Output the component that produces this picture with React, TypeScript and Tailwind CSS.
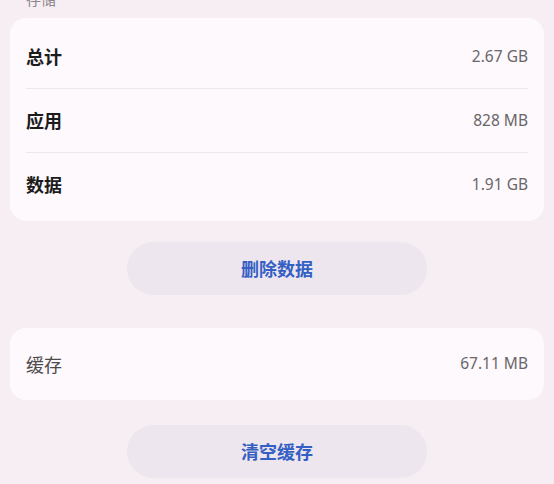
const cjk = '"Noto Sans CJK SC", "Noto Sans", sans-serif';
const num = '"Noto Sans", "Noto Sans CJK SC", sans-serif';

const rows = [
  { label: '总计', value: '2.67 GB' },
  { label: '应用', value: '828 MB' },
  { label: '数据', value: '1.91 GB' },
];

function Pill({ children }: { children: string }) {
  return (
    <button
      className="mx-auto flex h-[53px] w-[300px] items-center justify-center rounded-full bg-[#ede6ee] text-[18px] font-bold text-[#3460c4]"
      style={{ fontFamily: cjk }}
    >
      {children}
    </button>
  );
}

export default function App() {
  return (
    <div className="h-[484px] w-full overflow-hidden bg-[#f6eef3] px-[10px]">
      <div
        className="-mt-[12px] mb-[8px] pl-4 text-[15px] leading-[22px] text-[#8d878b]"
        style={{ fontFamily: cjk }}
      >
        存储
      </div>

      <div className="rounded-[16px] bg-[#fdf9fc] px-4 pt-[7px] pb-[5px]">
        {rows.map((r, i) => (
          <div key={r.label}>
            {i > 0 && <div className="h-px bg-[#eee8ec]" />}
            <div className="flex h-[63px] items-center justify-between">
              <span className="text-[18px] font-bold text-[#1c1c1c]" style={{ fontFamily: cjk }}>
                {r.label}
              </span>
              <span className="text-[15.5px] text-[#6a6669]" style={{ fontFamily: num }}>
                {r.value}
              </span>
            </div>
          </div>
        ))}
      </div>

      <div className="mt-[21px]">
        <Pill>删除数据</Pill>
      </div>

      <div className="mt-[33px] flex h-[72px] items-center justify-between rounded-[16px] bg-[#fdf9fc] px-4">
        <span className="text-[18px] text-[#4d4a4c]" style={{ fontFamily: cjk }}>
          缓存
        </span>
        <span className="text-[15.5px] text-[#6a6669]" style={{ fontFamily: num }}>
          67.11 MB
        </span>
      </div>

      <div className="mt-[25px]">
        <Pill>清空缓存</Pill>
      </div>
    </div>
  );
}
